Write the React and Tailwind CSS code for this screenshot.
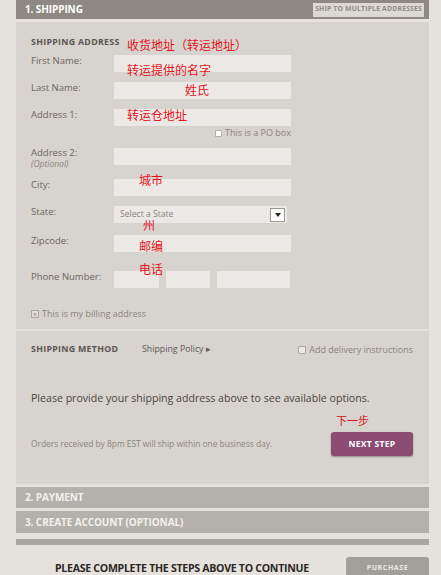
import { useState } from "react"

const font = { fontFamily: '"Open Sans", "Noto Sans CJK SC", sans-serif' }

function Field({ label, sub, className = "w-[177px]", children }) {
    return (
        <div className="flex items-start">
            <div className="w-[83px] shrink-0">
                <div className={`text-[9.5px] text-[#6b6662] ${sub ? "leading-[10px]" : "leading-[11px]"}`}>{label}</div>
                {sub && <div className="mt-[1px] text-[8.5px] leading-[9px] italic text-[#8a8580]">{sub}</div>}
            </div>
            {children || <div className={`h-[17px] bg-[#ebe8e5] ${className}`} />}
        </div>
    )
}

function Note({ children, className }) {
    // red annotations painted over the form in the screenshot
    return (
        <span className={`absolute text-[12px] leading-[14px] text-[#e3141b] whitespace-nowrap ${className}`}>
            {children}
        </span>
    )
}

export default function App() {
    const [billing, setBilling] = useState(true)

    return (
        <div className="w-[441px] h-[575px] overflow-hidden bg-[#e5e1dd] pl-[16px] pr-[12px]" style={font}>
            {/* step 1 header */}
            <div className="h-[19px] bg-[#8e8984] flex items-center justify-between pl-[9px] pr-[5px]">
                <span className="text-[10px] font-bold text-white tracking-[-0.1px]">1. SHIPPING</span>
                <span className="h-[14px] px-[2px] bg-[#dcd9d5] text-[#8f8b87] text-[6.8px] font-bold flex items-center tracking-[0.2px]">
                    SHIP TO MULTIPLE ADDRESSES
                </span>
            </div>

            {/* shipping address */}
            <div className="relative mt-[3px] bg-[#d7d3cf] pl-[15px] pt-[15px] pb-[10px]">
                <div className="text-[8.8px] leading-[10px] font-bold text-[#5a5551] tracking-[0.3px]">SHIPPING ADDRESS</div>
                <div className="flex flex-col">
                    <div className="mt-[8px]"><Field label="First Name:" /></div>
                    <div className="mt-[10px]"><Field label="Last Name:" /></div>
                    <div className="mt-[10px]"><Field label="Address 1:" /></div>
                    <div className="mt-[2px] h-[10px] w-[260px] flex items-center justify-end gap-[3px]">
                        <span className="w-[7px] h-[7px] bg-white border border-[#b5b1ad]" />
                        <span className="text-[9px] text-[#8a8580]">This is a PO box</span>
                    </div>
                    <div className="mt-[10px]"><Field label="Address 2:" sub="(Optional)" /></div>
                    <div className="mt-[11px]"><Field label="City:" /></div>
                    <div className="mt-[10px]">
                        <Field label="State:">
                            <div className="h-[17px] w-[173px] bg-[#ebe8e5] flex items-center justify-between pl-[6px] pr-[2px]">
                                <span className="text-[8.6px] text-[#8a8580]">Select a State</span>
                                <span className="w-[15px] h-[14px] bg-white border border-[#9b9793] flex items-center justify-center">
                                    <svg width="6" height="4" viewBox="0 0 6 4"><path d="M0 0h6L3 4z" fill="#222" /></svg>
                                </span>
                            </div>
                        </Field>
                    </div>
                    <div className="mt-[12px]"><Field label="Zipcode:" /></div>
                    <div className="mt-[19px]">
                        <Field label="Phone Number:">
                            <div className="flex gap-[7px]">
                                <div className="h-[17px] w-[45px] bg-[#ebe8e5]" />
                                <div className="h-[17px] w-[44px] bg-[#ebe8e5]" />
                                <div className="h-[17px] w-[73px] bg-[#ebe8e5]" />
                            </div>
                        </Field>
                    </div>
                    <div className="mt-[21px] h-[10px] flex items-center gap-[3px]" onClick={() => setBilling(!billing)}>
                        <span className="w-[8px] h-[8px] border border-[#a9a5a1] bg-[#e2dfdb] flex items-center justify-center text-[7px] leading-none text-[#8a8580]">
                            {billing ? "×" : ""}
                        </span>
                        <span className="text-[9px] text-[#8a8580]">This is my billing address</span>
                    </div>
                </div>

                <Note className="left-[111px] top-[17px]">收货地址（转运地址）</Note>
                <Note className="left-[111px] top-[42px]">转运提供的名字</Note>
                <Note className="left-[169px] top-[62px]">姓氏</Note>
                <Note className="left-[111px] top-[87px]">转运仓地址</Note>
                <Note className="left-[123px] top-[152px]">城市</Note>
                <Note className="left-[127px] top-[197px]">州</Note>
                <Note className="left-[123px] top-[218px]">邮编</Note>
                <Note className="left-[123px] top-[241px]">电话</Note>
            </div>

            {/* shipping method */}
            <div className="relative mt-[2px] bg-[#d7d3cf] pl-[15px] pr-[16px] pt-[14px] pb-[28px]">
                <div className="h-[10px] flex items-center">
                    <span className="w-[111px] text-[8.8px] font-bold text-[#5a5551] tracking-[0.3px]">SHIPPING METHOD</span>
                    <span className="text-[8.8px] text-[#5f5a56]">Shipping Policy ▸</span>
                    <span className="ml-auto flex items-center gap-[3px]">
                        <span className="w-[8px] h-[8px] bg-[#ebe8e5] border border-[#a9a5a1] rounded-[1px]" />
                        <span className="text-[9px] text-[#8a8580]">Add delivery instructions</span>
                    </span>
                </div>
                <div className="mt-[37px] text-[10.6px] leading-[13px] text-[#4a4541]">
                    Please provide your shipping address above to see available options.
                </div>
                <div className="mt-[27px] flex items-center justify-between">
                    <span className="text-[8.4px] text-[#8a8580]">Orders received by 8pm EST will ship within one business day.</span>
                    <button className="w-[82px] h-[24px] rounded-[3px] bg-[#8a4c72] shadow-[0_1px_2px_rgba(0,0,0,0.35)] text-white text-[8.5px] font-bold tracking-[0.3px]">
                        NEXT STEP
                    </button>
                </div>
                <span className="absolute left-[320px] top-[84px] text-[11px] leading-[12px] text-[#d8141b]">下一步</span>
            </div>

            {/* collapsed steps */}
            <div className="mt-[3px] h-[21px] bg-[#b4b0ab] flex items-center pl-[9px]">
                <span className="text-[10px] font-bold text-[#f2f0ee] tracking-[-0.1px]">2. PAYMENT</span>
            </div>
            <div className="mt-[3px] h-[22px] bg-[#b4b0ab] flex items-center pl-[9px]">
                <span className="text-[10px] font-bold text-[#f2f0ee] tracking-[-0.1px]">3. CREATE ACCOUNT (OPTIONAL)</span>
            </div>
            <div className="mt-[6px] h-[6px] bg-[#aaa6a1]" />

            {/* footer */}
            <div className="mt-[12px] flex items-start">
                <span className="mt-[4px] ml-[39px] text-[10.6px] leading-[14px] font-bold text-[#2b2826] tracking-[-0.3px]">
                    PLEASE COMPLETE THE STEPS ABOVE TO CONTINUE
                </span>
                <button className="ml-auto w-[83px] h-[24px] rounded-[3px] bg-[#a29e9a] text-[#ebe8e5] text-[7px] font-bold tracking-[0.6px] flex items-start justify-center pt-[6px]">
                    PURCHASE
                </button>
            </div>
        </div>
    )
}
